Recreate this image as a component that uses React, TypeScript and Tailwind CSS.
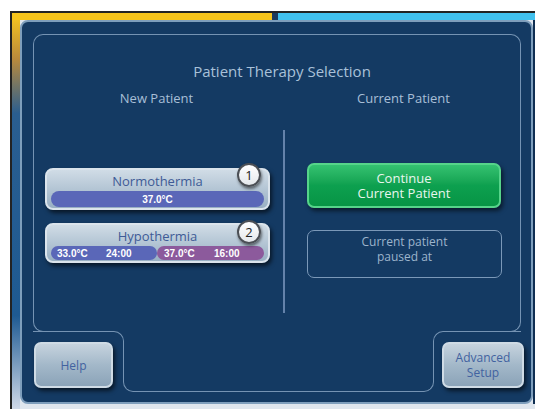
import React from 'react';

const lineColor = 'border-[#7593b3]';

const Badge = ({ n, top }: { n: string; top: string }) => (
  <div
    className={`absolute left-[190px] ${top} flex h-[24px] w-[24px] items-center justify-center rounded-full border-2 border-[#4b4f55] bg-gradient-to-b from-white to-[#e4e8ec] text-[13px] leading-none text-[#222] shadow-[1px_2px_3px_rgba(0,0,0,0.5)]`}
  >
    {n}
  </div>
);

const GrayButton = ({ children, className = '' }: { children: React.ReactNode; className?: string }) => (
  <div
    role="button"
    className={`flex h-[46px] flex-col items-center justify-center rounded-[7px] border-2 border-[#cfdbe5] bg-gradient-to-b from-[#c6d3de] via-[#a3b8c9] to-[#8ba3b8] text-[12px] leading-[15px] text-[#4262a0] shadow-[2px_3px_4px_rgba(0,0,0,0.6)] ${className}`}
  >
    {children}
  </div>
);

export default function App() {
  return (
    <div className="relative h-[409px] w-[535px] overflow-hidden bg-white font-['Open_Sans',sans-serif]">
      <div className="ml-[10px] mt-[11px] flex h-[398px] w-[540px] flex-col border-l-2 border-t-2 border-[#232323] bg-[#dfe6ee]">
        {/* top colour bar */}
        <div className="flex h-[7px]">
          <div className="w-[260px] bg-[#f6c41b]" />
          <div className="w-[6px] bg-[#1c3a5e]" />
          <div className="flex-1 bg-[#41c1ee]" />
        </div>

        <div className="flex">
          <div className="h-[389px] w-[8px] bg-[linear-gradient(to_bottom,#f0be22_0%,#b98a3c_10%,#2a5e90_24%,#1e5a92_76%,#cfd9e8_100%)]" />

          {/* main panel */}
          <div className="h-[384px] w-[513px] rounded-[8px] border-2 border-[#7e9ebc] bg-[#143a63] pl-[11px] pr-[10px] pt-[12px]">
            <div className={`flex h-[287px] flex-col rounded-t-[10px] border-x border-t ${lineColor}`}>
              <h1 className="mt-[26px] pl-[10px] text-center text-[15px] leading-[20px] text-[#a9c1d9]">
                Patient Therapy Selection
              </h1>

              <div className="flex flex-1">
                {/* new patient */}
                <div className="w-[249px]">
                  <div className="mt-[9px] pr-[4px] text-center text-[13px] leading-[16px] text-[#a8bfd7]">New Patient</div>

                  <div className="relative ml-[11px] mt-[62px] flex h-[42px] w-[225px] flex-col rounded-[8px] border-2 border-[#dbe4ec] bg-gradient-to-b from-[#d0dce6] to-[#98afc3] px-[4px] pb-[1px] shadow-[2px_3px_4px_rgba(0,0,0,0.6)]">
                    <div className="h-[21px] pt-[3px] text-center text-[13px] leading-[16px] text-[#3e5b96]">Normothermia</div>
                    <div className="flex h-[16px] items-center justify-center rounded-full bg-[#5a67b8] font-['Liberation_Sans',sans-serif] text-[10px] font-bold text-white">
                      37.0°C
                    </div>
                    <Badge n="1" top="top-[-7px]" />
                  </div>

                  <div className="relative ml-[11px] mt-[13px] flex h-[40px] w-[225px] flex-col rounded-[8px] border-2 border-[#dbe4ec] bg-gradient-to-b from-[#d0dce6] to-[#98afc3] px-[4px] shadow-[2px_3px_4px_rgba(0,0,0,0.6)]">
                    <div className="h-[21px] pt-[3px] text-center text-[13px] leading-[16px] text-[#3e5b96]">Hypothermia</div>
                    <div className="flex h-[14px] font-['Liberation_Sans',sans-serif] text-[10px] font-bold text-white">
                      <div className="flex w-[106px] items-center rounded-full bg-[#5a67b8] pl-[6px]">
                        <span className="w-[49px]">33.0°C</span>
                        <span>24:00</span>
                      </div>
                      <div className="flex flex-1 items-center rounded-full bg-[#8c5a9c] pl-[7px]">
                        <span className="w-[50px]">37.0°C</span>
                        <span>16:00</span>
                      </div>
                    </div>
                    <Badge n="2" top="top-[-5px]" />
                  </div>
                </div>

                <div className="mt-[49px] h-[183px] w-[2px] bg-[#6482aa]" />

                {/* current patient */}
                <div className="flex-1">
                  <div className="mt-[9px] pl-[2px] text-center text-[13px] leading-[16px] text-[#a8bfd7]">Current Patient</div>
                  <div
                    role="button"
                    className="ml-[22px] mt-[57px] flex h-[45px] w-[194px] flex-col items-center justify-center rounded-[7px] border-2 border-[#56d48a] bg-gradient-to-b from-[#34c271] via-[#0da04f] to-[#079445] text-[13px] leading-[15px] text-[#e8f6ee] shadow-[2px_3px_4px_rgba(0,0,0,0.55)]"
                  >
                    <div>Continue</div>
                    <div>Current Patient</div>
                  </div>
                  <div className="ml-[22px] mt-[22px] h-[48px] w-[195px] rounded-[7px] border border-[#7b98b8] pt-[3px] text-center text-[12px] leading-[15px] text-[#9db4cc]">
                    <div>Current patient</div>
                    <div>paused at</div>
                  </div>
                </div>
              </div>
            </div>

            {/* lower corners of the outline */}
            <div className="flex h-[11px]">
              <div className={`w-[80px] rounded-bl-[10px] border-b border-l ${lineColor}`} />
              <div className={`ml-auto w-[78px] rounded-br-[10px] border-b border-r ${lineColor}`} />
            </div>

            <div className="-mt-px flex">
              <div className="flex w-[91px] flex-col">
                <div className={`h-[11px] rounded-tr-[10px] border-r border-t ${lineColor}`} />
                <GrayButton className="ml-[1px] w-[79px]">Help</GrayButton>
              </div>
              <div className={`-ml-px mt-[10px] h-[51px] w-[311px] rounded-b-[10px] border-x border-b ${lineColor}`} />
              <div className="-ml-px flex w-[88px] flex-col">
                <div className={`h-[11px] rounded-tl-[10px] border-l border-t ${lineColor}`} />
                <GrayButton className="ml-[9px] w-[82px]">
                  <div>Advanced</div>
                  <div>Setup</div>
                </GrayButton>
              </div>
            </div>
          </div>

          <div className="h-[384px] w-[10px] bg-[#0f2e52]" />
        </div>
      </div>
    </div>
  );
}
